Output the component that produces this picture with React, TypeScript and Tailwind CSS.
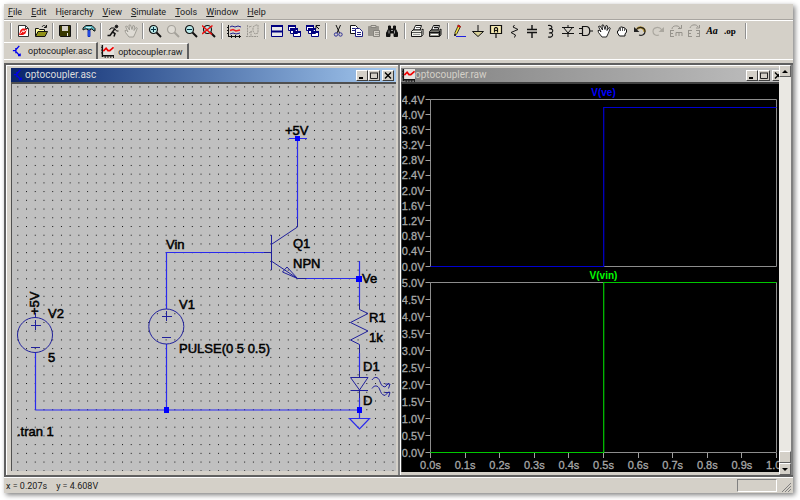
import React from 'react';

const FACE = 'bg-[#d4d0c8]';

const Icon: React.FC<{ children: React.ReactNode; size?: number }> = ({ children, size = 14 }) => (
  <svg width={size} height={size} viewBox="0 0 14 14" fill="none" stroke="#111" strokeWidth="1" aria-hidden="true">
    {children}
  </svg>
);

const TransistorIcon = () => (
  <Icon size={12}>
    <path d="M1 6.500h3M4.500 3.500v6M5 5l3.500-4M5 8l4 4.500M9.500 10v3M7 12.500h3" stroke="#0000f0" strokeWidth="1.500" />
  </Icon>
);

const WaveIcon = () => (
  <Icon size={13}>
    <path d="M2 0h12v11H2z" fill="#e4e2de" stroke="none" />
    <path d="M1.500 0v13M1 11.500h13" strokeWidth="1.500" />
    <path d="M0 2.500h1M0 5.500h1M0 8.500h1M4.500 12v2M7.500 12v2M10.500 12v2M13.500 12v2" />
    <path d="M2.500 6.500l3-3 2 2.500h2l4-3.500" stroke="#f00000" strokeWidth="1.800" />
  </Icon>
);

const Lens: React.FC<{ color?: string; fill?: string; children?: React.ReactNode }> = ({ color = '#111', fill = '#b8e8e8', children }) => (
  <Icon>
    <circle cx="5.500" cy="5.500" r="4" stroke={color} strokeWidth="1.200" fill={fill} />
    <path d="M8.500 8.500l4.500 4.500" stroke={color} strokeWidth="2" />
    {children}
  </Icon>
);

const Turn: React.FC<{ color: string; flip?: boolean; accent?: string }> = ({ color, flip, accent }) => (
  <Icon>
    <g transform={flip ? 'matrix(-1 0 0 1 14 0)' : undefined}>
      {accent && <path d="M4 5c3-3 8-1 7.500 3" stroke={accent} strokeWidth="2.400" />}
      <path d="M3 6c3-4 9-3 9 1.500 0 3-3 4.500-6 3.500" stroke={color} strokeWidth="1.200" />
      <path d="M1 3v5h5.500z" fill={color} stroke="none" />
    </g>
  </Icon>
);

const Hand: React.FC<{ color?: string; fill?: string; open?: boolean }> = ({ color = '#111', fill = '#fff', open }) => (
  <Icon>
    <path
      d={open
        ? 'M5 13L1.500 8.500 1 6.500l1.500 0L4 8 1.500 2.500 3 2l2.500 4L5 1h1.500L8 5.500 9 1.500l1.500.5-.5 4.500 2-3 1.300.700-2 5L9.500 13z'
        : 'M4.500 12L2.500 9V7l1.500-.5V4.500l1-.7.500-.8h1.500l1 .5 1.500.200.500 1 1.500.8V8L10 10v2z'}
      fill={fill}
      stroke={color}
      strokeWidth={open ? 0.9 : 1}
      strokeLinejoin="round"
    />
    {!open && <path d="M5.500 4v3M7.500 3.500V7M9.500 4.500V7" stroke={color} strokeWidth=".7" />}
  </Icon>
);

const Windows: React.FC<{ closing?: boolean }> = ({ closing }) => (
  <Icon>
    <g fill="#fff" stroke="#000080">
      <path d="M.5 1.500h7v5h-7zM2.500 4.500h7v5h-7zM5.500 7.500h7v5h-7z" />
      <path d="M0 2h8M2 5h8M5 8h8" strokeWidth="2" />
    </g>
    {closing && <path d="M10 4.500V1.500h4M10 2l3 3" />}
  </Icon>
);

const Printer: React.FC<{ dark?: boolean }> = ({ dark }) => (
  <Icon>
    <path d="M3.500 6l2-4.500h6l-1.500 4.500z" fill="#fff" />
    <path d="M1.500 7.500L3 6h8.500l1.500-1v5.500l-1.500 2h-10z" fill={dark ? '#9a9a90' : '#f0f0e8'} />
    <path d="M1.500 8.500h10M11.500 7v5M6 3.500h4" strokeWidth={dark ? 1.3 : 0.7} />
    <path d="M3 10.500h7" stroke={dark ? '#fff' : '#999'} />
  </Icon>
);

type Tool = { label: string; icon: React.ReactNode };

const toolGroups: Tool[][] = [
  [
    {
      label: 'New schematic',
      icon: (
        <Icon>
          <path d="M2.500 1.500h7l3 3v8h-10z" fill="#fff" stroke="#333" />
          <path d="M3 11l1.500-5 2-1.500 4.500 0-1.500 5L7 11z" fill="#f01010" stroke="none" />
          <path d="M4.500 9.500L7 6.500l.500 1.500L10 6" stroke="#fff" />
          <path d="M9.500 1.500v3h3" stroke="#333" />
        </Icon>
      ),
    },
    {
      label: 'Open',
      icon: (
        <Icon>
          <path d="M1.500 12V4.500h3l1 1h5V7" fill="#ffffa0" />
          <path d="M1.500 12.500L4 7.500h9.500L11 12.500z" fill="#909018" />
          <path d="M8 3c1-2 3-2 4 0M12.500 1v2.500H10" />
        </Icon>
      ),
    },
  ],
  [
    {
      label: 'Save',
      icon: (
        <Icon>
          <path d="M1.500 1.500h11v11h-10l-1-1z" fill="#383800" />
          <path d="M4 2h6v5H4z" fill="#d4d0c8" stroke="none" />
          <path d="M9 9h1v3H9z" fill="#e8e8e8" stroke="none" />
        </Icon>
      ),
    },
  ],
  [
    {
      label: 'Control panel',
      icon: (
        <Icon>
          <path d="M1 6V4l3-2.500h6l3 3V7h-1l-2-2H8.500v1h-3V5H3z" fill="#58b0b8" />
          <path d="M6 6.500h2v6H6z" fill="#3060ff" stroke="#1030c0" />
          <path d="M4 3.500h5" stroke="#d0f4f8" />
        </Icon>
      ),
    },
  ],
  [
    {
      label: 'Run',
      icon: (
        <Icon>
          <circle cx="10.500" cy="2.500" r="1.300" fill="#111" />
          <path d="M9 4.500L6.500 8l2.500 1.500-1 3M6.500 8L4 11.500H1.500" strokeWidth="1.500" />
          <path d="M8.500 4H5L3.500 6M9 5l1.500 2h2" />
        </Icon>
      ),
    },
    { label: 'Halt', icon: <Hand color="#9a9790" fill="#dedbd4" open /> },
  ],
  [
    { label: 'Zoom in', icon: <Lens><path d="M3 5.500h5M5.500 3v5" stroke="#003040" /></Lens> },
    { label: 'Pan', icon: <Lens color="#a5a29b" fill="#dedbd4" /> },
    { label: 'Zoom out', icon: <Lens><path d="M3 5.500h5" stroke="#003040" /></Lens> },
    { label: 'Zoom to fit', icon: <Lens><path d="M0 1.500l10 9M10.500 1.500L0 10" stroke="#f01010" strokeWidth="1.600" /></Lens> },
  ],
  [
    {
      label: 'Autorange',
      icon: (
        <Icon>
          <path d="M1.500 1v12M1 12.500h13M0 3.500h2M0 6.500h2M0 9.500h2M4.500 11v3M8.500 11v3M12.500 11v3" />
          <path d="M3 3l2-1 3 1 3-1 3 1M3 10l3-1 3 1 4-1" stroke="#202090" />
          <path d="M3 6.500l3-1 3 1.500 4-1" stroke="#f02020" strokeWidth="1.500" />
        </Icon>
      ),
    },
    {
      label: 'Pick visible traces',
      icon: (
        <Icon>
          <path d="M2.500 1v12M1 12.500h12M4 3l3-1M4 9l3-2M8 3l3-2h2v8l-3 1-2-3zM6 7v5" stroke="#9a9790" strokeDasharray="2 .7" />
        </Icon>
      ),
    },
  ],
  [
    {
      label: 'Tile windows',
      icon: (
        <Icon>
          <path d="M1.500 1.500h11v11h-11z" fill="#e8e8e8" stroke="#000080" />
          <path d="M1 2h12M1 7.500h12" stroke="#000080" strokeWidth="2.200" />
        </Icon>
      ),
    },
    { label: 'Cascade windows', icon: <Windows /> },
    { label: 'Close all windows', icon: <Windows closing /> },
  ],
  [
    {
      label: 'Cut',
      icon: (
        <Icon>
          <path d="M5 1l3.500 8M9.500 1L6 9" />
          <g stroke="#303098"><circle cx="5" cy="10.500" r="1.700" /><circle cx="9.500" cy="10.500" r="1.700" /></g>
        </Icon>
      ),
    },
    {
      label: 'Copy',
      icon: (
        <Icon>
          <path d="M1.500 1.500h5l2 2v6h-7z" fill="#fff" />
          <path d="M6.500 4.500h4l3 3v5h-7z" fill="#fff" stroke="#202080" />
          <path d="M3 4.500h3M3 6.500h3M8 8.500h4M8 10.500h4" stroke="#202080" />
        </Icon>
      ),
    },
    {
      label: 'Paste',
      icon: (
        <Icon>
          <path d="M1.500 2.500h10v9h-10z" fill="#98958e" stroke="#98958e" />
          <path d="M4 1.500h5v2H4z" fill="#d4d0c8" stroke="#85827c" />
          <path d="M6.500 6.500h6v6h-6z" fill="#d4d0c8" stroke="#85827c" />
          <path d="M8 8.500h4M8 10.500h4" stroke="#98958e" />
        </Icon>
      ),
    },
    {
      label: 'Find',
      icon: (
        <Icon>
          <path d="M3.500 2h2v3h3V2h2v3l2 4v3.500H9V9H5v3.500H1.500V9l2-4z" fill="#111" />
          <path d="M4 6.500v3M9.500 6.500v3M6 6.500h2" stroke="#bbb" strokeWidth=".8" />
        </Icon>
      ),
    },
  ],
  [
    { label: 'Print setup', icon: <Printer /> },
    { label: 'Print', icon: <Printer dark /> },
  ],
  [
    {
      label: 'Wire',
      icon: (
        <Icon>
          <path d="M3 12.500h10" stroke="#2020e0" />
          <path d="M5.500 1L7.500 2.500 4 9.500 2 11.500 2 8.500z" fill="#f0e040" strokeWidth=".8" />
          <path d="M4.500 1.500l3 1.500" stroke="#d01010" strokeWidth="1.800" />
          <path d="M2 12V10" strokeWidth="1.500" />
        </Icon>
      ),
    },
    { label: 'Ground', icon: <Icon><path d="M7 1v6M1.500 7.500h11L7 12.500z" fill="#d8d098" /></Icon> },
    {
      label: 'Label net',
      icon: (
        <Icon>
          <path d="M1.500 1.500h11v8h-11z" fill="#f4e8b0" strokeWidth="1.200" />
          <path d="M5.500 8.500V4.500l1-1h1l1 1v4M5.500 6.500h3M7 10v4" strokeWidth="1.200" />
        </Icon>
      ),
    },
    { label: 'Resistor', icon: <Icon><path d="M7.500 1L6 3l5 2.500-7 3L8.500 11l-1 2.500" /></Icon> },
    { label: 'Capacitor', icon: <Icon><path d="M7 1v5M7 9v5M2 5.500h10M2 8.500h10" strokeWidth="1.400" /></Icon> },
    { label: 'Inductor', icon: <Icon><path d="M5 1.500c5-1 5 4 1 3.500 5-1 5 4.500 0 4 5-1 5 5-1 4" strokeWidth="1.100" /></Icon> },
    { label: 'Diode', icon: <Icon><path d="M7 1v2M7 9v4M1 3.500h12M2.500 3.500L7 9l4.500-5.500M1 9.500h12" /></Icon> },
    { label: 'Component', icon: <Icon><path d="M3.500 2.500H7c5 0 5 9 0 9H3.500zM0 4.500h3M0 9.500h3M11 7h3" strokeWidth="1.200" /></Icon> },
    { label: 'Move', icon: <Hand open /> },
    { label: 'Drag', icon: <Hand /> },
    { label: 'Undo', icon: <Turn color="#222" accent="#c09a30" /> },
    { label: 'Redo', icon: <Turn color="#aaa79f" flip /> },
    {
      label: 'Rotate',
      icon: (
        <Icon>
          <path d="M3 5c0-4 7-4 8-1M12.500 1v3.500H9M1 6.500h4M1 9.500h3M1 12.500h4M1.500 6v7M7 12V8.500h6V12M10 9v3" stroke="#96938c" />
        </Icon>
      ),
    },
    {
      label: 'Mirror',
      icon: (
        <Icon>
          <path d="M3 4c1-4 7-4 8-1M12.500 1v3H9M1 6.500h4M1 9.500h3M1 12.500h4M1.500 6v7M9 6.500h4M10 9.500h3M9 12.500h4M12.500 6v7" stroke="#96938c" />
        </Icon>
      ),
    },
    { label: 'Text', icon: <span className="font-['Liberation_Serif',serif] text-[10px] leading-3 font-bold italic text-black">Aa</span> },
    { label: 'SPICE directive', icon: <span className="font-['Liberation_Serif',serif] text-[9px] leading-3 font-bold text-black">.op</span> },
  ],
];

const menus: [string, string, string][] = [
  ['', 'F', 'ile'],
  ['', 'E', 'dit'],
  ['H', 'i', 'erarchy'],
  ['', 'V', 'iew'],
  ['', 'S', 'imulate'],
  ['', 'T', 'ools'],
  ['', 'W', 'indow'],
  ['', 'H', 'elp'],
];

const Separator: React.FC<{ wide?: boolean }> = ({ wide }) => (
  <div className={`flex justify-center ${wide ? 'w-[7px]' : 'w-[6px]'}`}>
    <div className="h-4 w-[2px] border-l border-l-[#909090] border-r border-r-white" />
  </div>
);

const CaptionButtons = () => {
  const base = 'flex h-[11px] w-3 items-center justify-center border border-t-white border-l-white border-r-[#404040] border-b-[#404040] bg-[#d4d0c8]';
  return (
    <div className="flex">
      <button aria-label="Minimize" className={base}>
        <svg width="8" height="7"><path d="M1 6h4" stroke="#000" strokeWidth="2" /></svg>
      </button>
      <button aria-label="Maximize" className={base}>
        <svg width="8" height="7" fill="none" stroke="#222"><path d="M.5 1v5.500h7V1M0 1h8" /></svg>
      </button>
      <button aria-label="Close" className={`${base} ml-[2px]`}>
        <svg width="8" height="7"><path d="M1 .5l6 6M7 .5l-6 6" stroke="#000" strokeWidth="1.400" /></svg>
      </button>
    </div>
  );
};

const Schematic = () => (
  <svg className="h-full min-h-[387px] w-full bg-[#c0c0c0]" role="img" aria-label="optocoupler schematic">
    <defs>
      <pattern id="grid" width="8.725" height="8.725" patternUnits="userSpaceOnUse" x="5.300" y="2.400">
        <rect width="1" height="1" fill="#101010" />
      </pattern>
    </defs>
    <rect width="100%" height="100%" fill="url(#grid)" />
    <g fill="none" stroke="#2a2aee" strokeWidth="1.200">
      <path d="M23.500 268.500V326M23.500 326H347M154.500 225V168.500H252M154.500 260V326M285.500 55V135M277 54.500h18M294 194.500h53M347.500 177v42M347.500 269v18M347.500 314v20" />
      <path d="M337.500 334.500h20L347.500 345z" />
    </g>
    <g fill="none" stroke="#20209c">
      <circle cx="23" cy="251" r="17.500" />
      <circle cx="154.300" cy="242.500" r="17.500" />
      <path d="M19 241.500h10M23.500 236v10M19 263.500h9M150 232.500h10M154.500 227v10M150 253.500h9M23.500 229v5" />
      <path d="M252 168.500h8M259.500 151v35M260 160l25.500-17v-8M260 177.500l25.500 17h9M270.500 188l4.500-5 10.500 11.500z" />
      <path d="M347.500 219v6.500l8.500 4-17.500 9 17.500 8.500-17.500 9 9 4.500V269" />
      <path d="M347.500 287v6M338.500 293.500h17.500L347.500 306zM338.500 306.500h17.500M347.500 306v8" />
      <path d="M360 296c2-3.500 6-3.500 7.500.500 1.500 3.500 2 6 5.500 6.500l4-4M373 300h5l-1.500 4.500" />
      <path d="M360 304.500c2-3.500 6-3.500 7.500.500 1.500 3.500 2 6 5.500 6.500l4-4M373 308.500h5l-1.500 4.500" />
    </g>
    <g fill="#0000ff">
      <rect x="283" y="52" width="5" height="5" />
      <rect x="344" y="192" width="6" height="6" />
      <rect x="152" y="323" width="5" height="6" />
      <rect x="345" y="323" width="5" height="6" />
    </g>
    <g className="font-['Liberation_Sans',sans-serif] text-[13px]" fill="#000" stroke="#000" strokeWidth=".5">
      <text x="273" y="51">+5V</text>
      <text x="154" y="165">Vin</text>
      <text x="281" y="164">Q1</text>
      <text x="281" y="184">NPN</text>
      <text x="350" y="199">Ve</text>
      <text x="357" y="238">R1</text>
      <text x="357" y="258">1k</text>
      <text x="351" y="287">D1</text>
      <text x="351" y="321">D</text>
      <text x="167" y="225">V1</text>
      <text x="167" y="269">PULSE(0 5 0.5)</text>
      <text x="36" y="234">V2</text>
      <text x="36" y="278">5</text>
      <text x="5" y="352">.tran 1</text>
      <text transform="translate(27 231) rotate(-90)">+5V</text>
    </g>
  </svg>
);

const LEFT = 28.5;
const RIGHT = 374.5;
const STEP_X = (LEFT + RIGHT) / 2;

type PlotProps = {
  top: number;
  bottom: number;
  max: number;
  step: number;
  level: number;
  title: string;
  color: string;
  line: string;
};

const Plot: React.FC<PlotProps> = ({ top, bottom, max, step, level, title, color, line }) => {
  const count = Math.round(max / step);
  const toY = (v: number) => bottom - (v / max) * (bottom - top);
  const snap = (v: number) => Math.floor(toY(v)) + 0.5;
  return (
    <g>
      <path d={`M${LEFT} ${top}H${RIGHT}V${bottom}H${LEFT}z`} fill="none" stroke="#8c8c8c" />
      {Array.from({ length: count + 1 }).map((_, i) => (
        <g key={i}>
          <path d={`M${LEFT - 5} ${snap(i * step)}h5`} stroke="#a0a0a0" />
          <text x={LEFT - 6} y={Math.round(toY(i * step)) + 4} textAnchor="end" fill="#a8a8a8" stroke="#a8a8a8" strokeWidth=".3">
            {(i * step).toFixed(1)}V
          </text>
        </g>
      ))}
      <path d={`M${LEFT} ${bottom}H${STEP_X + 0.2}V${snap(level)}H${RIGHT}`} fill="none" stroke={line} strokeWidth="1.200" />
      <text x={STEP_X} y={top - 4} textAnchor="middle" fill={color} className="text-[10px] font-bold">{title}</text>
    </g>
  );
};

const Waveforms = () => (
  <svg className="h-full min-h-[387px] w-full bg-black font-['Liberation_Sans',sans-serif] text-[11px]" role="img" aria-label="optocoupler waveforms">
    <Plot top={15.5} bottom={182.5} max={4.4} step={0.4} level={4.18} title="V(ve)" color="#0000ff" line="#0000d0" />
    <Plot top={198.5} bottom={368.5} max={5} step={0.5} level={5} title="V(vin)" color="#00ff00" line="#00c800" />
    {Array.from({ length: 11 }).map((_, i) => {
      const x = LEFT + i * 34.6;
      return (
        <g key={i}>
          <path d={`M${Math.floor(x) + 0.5} 369v5`} stroke="#a0a0a0" />
          <text x={x} y="385" textAnchor="middle" fill="#a8a8a8" stroke="#a8a8a8" strokeWidth=".3">{(i / 10).toFixed(1)}s</text>
        </g>
      );
    })}
  </svg>
);

const App: React.FC = () => (
  <div className="flex min-h-screen flex-col bg-white pt-1 pr-[7px] pb-[7px] pl-1 font-[Roboto,sans-serif] text-[9px] leading-3 text-[#202020]">
    <div className={`flex flex-1 flex-col ${FACE} shadow-[2px_2px_5px_rgba(0,0,0,0.5)]`}>
      <nav className="flex h-4 items-center gap-[9px] border-b border-[#a8a5a0] px-1 pt-px">
        {menus.map(([pre, key, post]) => (
          <button key={pre + key + post}>{pre}<u>{key}</u>{post}</button>
        ))}
      </nav>

      <div className="flex h-[22px] items-center border-t border-white pb-[2px] pl-1">
        {toolGroups.map((group, i) => (
          <React.Fragment key={group[0].label}>
            <Separator wide={i > 4} />
            {group.map((tool) => (
              <button key={tool.label} aria-label={tool.label} className="flex h-[18px] w-[18px] items-center justify-center">
                {tool.icon}
              </button>
            ))}
          </React.Fragment>
        ))}
        <div className="ml-1"><Separator /></div>
      </div>

      <div role="tablist" className="flex h-[18px] border-b border-white">
        <button role="tab" aria-selected="true" className="flex items-center gap-1 border-t border-r-2 border-t-white border-r-[#606060] pr-1 pl-2">
          <TransistorIcon />
          optocoupler.asc
        </button>
        <button role="tab" aria-selected="false" className="mt-px ml-[2px] flex items-center gap-1 border-t border-r-2 border-t-white border-r-[#606060] pr-1 pl-px">
          <WaveIcon />
          optocoupler.raw
        </button>
      </div>

      <main className="mt-[3px] flex flex-1 border-t-2 border-b-2 border-l-2 border-[#606060] bg-[#808080]">
        <div className="flex min-w-0 flex-1 gap-[2px] overflow-hidden">
          <section className={`flex min-w-0 flex-1 flex-col border-t border-l border-white ${FACE} pt-[2px] pr-[2px] pb-1 pl-1`}>
            <header className="flex h-[14px] items-center bg-linear-to-r from-[#0a246a] to-[#a6caf0] pr-[2px] pl-[2px]">
              <TransistorIcon />
              <h2 className="flex-1 text-[10px] text-[#dcdcdc]">optocoupler.asc</h2>
              <CaptionButtons />
            </header>
            <div className="flex-1 overflow-hidden border-t-2 border-l border-[#505050]">
              <Schematic />
            </div>
          </section>

          <section className={`-mr-[7px] flex min-w-0 flex-1 flex-col border-t border-l border-white ${FACE} pt-[2px] pb-[3px]`}>
            <header className="flex h-[14px] items-center bg-linear-to-r from-[#808080] to-[#c0c0c0] pr-[2px] pl-px">
              <WaveIcon />
              <h2 className="flex-1 text-[10px] text-[#d4d0c8]">optocoupler.raw</h2>
              <CaptionButtons />
            </header>
            <div className="flex-1 overflow-hidden border-t-2 border-l border-[#404040]">
              <Waveforms />
            </div>
          </section>
        </div>

        <div className="mr-[2px] flex w-3 flex-col bg-[#eae8e3]">
          <button aria-label="Scroll up" className={`flex h-3 items-center justify-center border border-t-white border-l-white border-r-[#606060] border-b-[#606060] ${FACE}`}>
            <svg width="6" height="3"><path d="M0 3l3-3 3 3z" /></svg>
          </button>
          <div className="flex-1" />
          <div className={`h-3 border border-t-white border-l-white border-r-[#606060] border-b-[#606060] ${FACE}`} />
          <button aria-label="Scroll down" className={`flex h-3 items-center justify-center border border-t-white border-l-white border-r-[#606060] border-b-[#606060] ${FACE}`}>
            <svg width="6" height="3"><path d="M0 0l3 3 3-3z" /></svg>
          </button>
        </div>
      </main>

      <footer className="flex h-4 items-center gap-[9px] border-t border-white pl-[2px]">
        <span>x = 0.207s</span>
        <span>y = 4.608V</span>
        <div className="ml-auto h-[13px] w-10 border border-t-[#808080] border-l-[#808080] border-r-white border-b-white" />
        <svg className="mr-[2px] mb-px -ml-1 self-end" width="9" height="9" stroke="#808080" fill="none" aria-hidden="true">
          <path d="M0 9l9-9M3 9l6-6M6 9l3-3" />
        </svg>
      </footer>
    </div>
  </div>
);

export default App;
